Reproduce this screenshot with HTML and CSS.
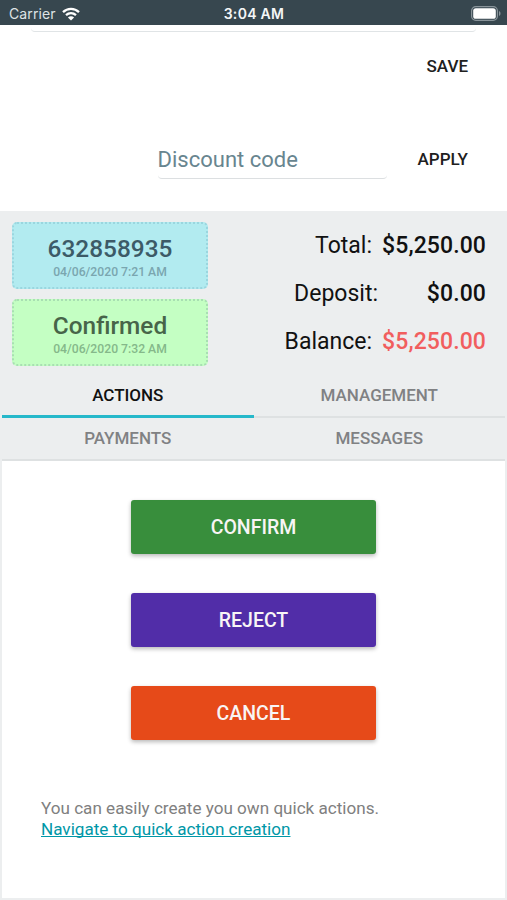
FILE: index.html
```html
<!DOCTYPE html>
<html lang="en">
<head>
<meta charset="utf-8">
<meta name="viewport" content="width=device-width, initial-scale=1">
<title>Booking details</title>
<link rel="stylesheet" href="styles.css">
</head>
<body>
<header class="status-bar">
  <div class="carrier"><span>Carrier</span>
    <svg class="wifi" viewBox="0 0 18 14" width="18" height="14" fill="none" stroke="#fff" stroke-width="2.3"><path d="M1 5.1C5.5.8 12.5.8 17 5.1M4 8.2c2.9-2.6 7.1-2.6 10 0"/><path fill="#fff" stroke="none" d="M9 13.4 5.9 10.4c1.7-1.5 4.5-1.5 6.2 0z"/></svg>
  </div>
  <div class="clock">3:04 AM</div>
  <svg class="battery" viewBox="0 0 30 15" width="30" height="15"><rect x=".6" y=".6" width="25.8" height="13.8" rx="4.2" fill="none" stroke="#89949a" stroke-width="1.2"/><rect x="2.2" y="2.2" width="22.6" height="10.6" rx="2.6" fill="#fff"/><path d="M28 5v5c2-.8 2-4.2 0-5z" fill="#89949a"/></svg>
</header>
<main>
  <section class="notes">
    <div class="notes-line"></div>
    <button class="text-button save">SAVE</button>
  </section>
  <section class="discount">
    <input class="discount-input" type="text" placeholder="Discount code">
    <button class="text-button apply">APPLY</button>
  </section>
  <section class="summary">
    <div class="badges">
      <div class="badge badge-id"><strong>632858935</strong><small>04/06/2020 7:21 AM</small></div>
      <div class="badge badge-state"><strong>Confirmed</strong><small>04/06/2020 7:32 AM</small></div>
    </div>
    <div class="totals">
      <div class="row"><span>Total:</span><b>$5,250.00</b></div>
      <div class="row"><span>Deposit:</span><b>$0.00</b></div>
      <div class="row due"><span>Balance:</span><b>$5,250.00</b></div>
    </div>
  </section>
  <nav class="tabs">
    <a class="tab active">ACTIONS</a>
    <a class="tab">MANAGEMENT</a>
    <a class="tab">PAYMENTS</a>
    <a class="tab">MESSAGES</a>
  </nav>
  <section class="panel">
    <button class="action confirm">CONFIRM</button>
    <button class="action reject">REJECT</button>
    <button class="action cancel">CANCEL</button>
    <p class="hint"><span class="hint-text">You can easily create you own quick actions.</span><br><a class="hint-link">Navigate to quick action creation</a></p>
  </section>
</main>
</body>
</html>
```
FILE: styles.css
```css
* { box-sizing: border-box; }
body {
  margin: 0;
  height: 900px;
  overflow: hidden;
  background: #fff;
  font-family: Roboto, sans-serif;
  color: #111417;
}
button { border: 0; padding: 0; background: none; font-family: inherit; }
main { display: flex; flex-direction: column; height: 875px; }

.status-bar {
  display: grid;
  grid-template-columns: 1fr auto 1fr;
  align-items: center;
  height: 25px;
  padding: 2px 6px 0 9px;
  background: #37474f;
  color: #f4f6f7;
  font-family: Inter, sans-serif;
  font-size: 14px;
}
.carrier { display: flex; align-items: center; gap: 6px; color: #dfe3e5; letter-spacing: .1px; }
.clock { font-weight: 600; letter-spacing: .3px; margin-left: -2px; }
.battery { justify-self: end; }

.notes { height: 80px; padding: 0 31px; text-align: right; }
.notes-line {
  height: 7px;
  border-bottom: 1px solid #e0e4e6;
  border-radius: 0 0 4px 4px;
}
.text-button { font-size: 17px; font-weight: 500; color: #202020; line-height: 20px; }
.save { display: inline-block; margin: 24px 8px 0 0; }
.apply { margin-top: -1px; }

.discount {
  display: flex;
  justify-content: flex-end;
  align-items: center;
  gap: 31px;
  height: 106px;
  padding: 2px 39px 0 0;
}
.discount-input {
  width: 229px;
  height: 40px;
  padding: 2px 0 0;
  border: 0;
  border-bottom: 1px solid #dcdfe1;
  border-radius: 0 0 4px 4px;
  background: transparent;
  font: 22px Roboto, sans-serif;
}
.discount-input::placeholder { color: #68858f; opacity: 1; }

.summary {
  display: flex;
  justify-content: space-between;
  height: 163px;
  padding: 11px 21px 0 12px;
  background: #eceeef;
}
.badges { display: flex; flex-direction: column; gap: 10px; width: 196px; }
.badge {
  display: flex;
  flex-direction: column;
  align-items: center;
  height: 67px;
  padding-top: 11px;
  border: 2px dotted;
  border-radius: 5px;
}
.badge strong { font-size: 24.4px; line-height: 28px; font-weight: 500; }
.badge small { margin-top: 1px; font-size: 12.2px; line-height: 16px; font-weight: 500; }
.badge-id { background: #b2ebf0; border-color: #9ad6df; color: #3c5a67; }
.badge-id small { color: #7aa6af; }
.badge-state { background: #c4ffc3; border-color: #a8dfb2; color: #476549; }
.badge-state small { color: #85b88a; }
.row { display: flex; justify-content: flex-end; height: 48px; line-height: 48px; font-size: 23px; color: #111; }
.row span { margin-right: 10px; }
.row b { min-width: 98px; font-weight: 500; text-align: right; letter-spacing: .1px; }
.due b { color: #f15e5e; }

.tabs { display: grid; grid-template-columns: 1fr 1fr; padding: 0 2px; background: #eceeef; }
.tab {
  height: 44px;
  border-bottom: 2px solid #dee1e2;
  color: #808183;
  font-size: 17px;
  line-height: 42px;
  font-weight: 500;
  text-align: center;
}
.tab:nth-child(n+3) { height: 43px; line-height: 40px; }
.tab.active { color: #111; border-bottom: 3px solid #26b8ca; }

.panel {
  flex: 1;
  display: flex;
  flex-direction: column;
  align-items: center;
  padding-top: 39px;
  border: 2px solid #eceeef;
  border-top: 0;
}
.action {
  width: 245px;
  height: 54px;
  margin: 0 0 39px;
  border-radius: 3px;
  box-shadow: 0 2px 4px rgba(0, 0, 0, .28);
  color: #f8f5f5;
  font-size: 19.5px;
  font-weight: 500;
}
.confirm { background: #388e3c; }
.reject { background: #512da8; }
.cancel { background: #e64a19; }
.hint { align-self: flex-start; margin: 19px 0 0 39px; font-size: 17.1px; line-height: 21px; color: #808080; }
.hint-link { color: #0097a7; text-decoration: underline; text-decoration-skip-ink: none; text-decoration-thickness: 1px; }
```
